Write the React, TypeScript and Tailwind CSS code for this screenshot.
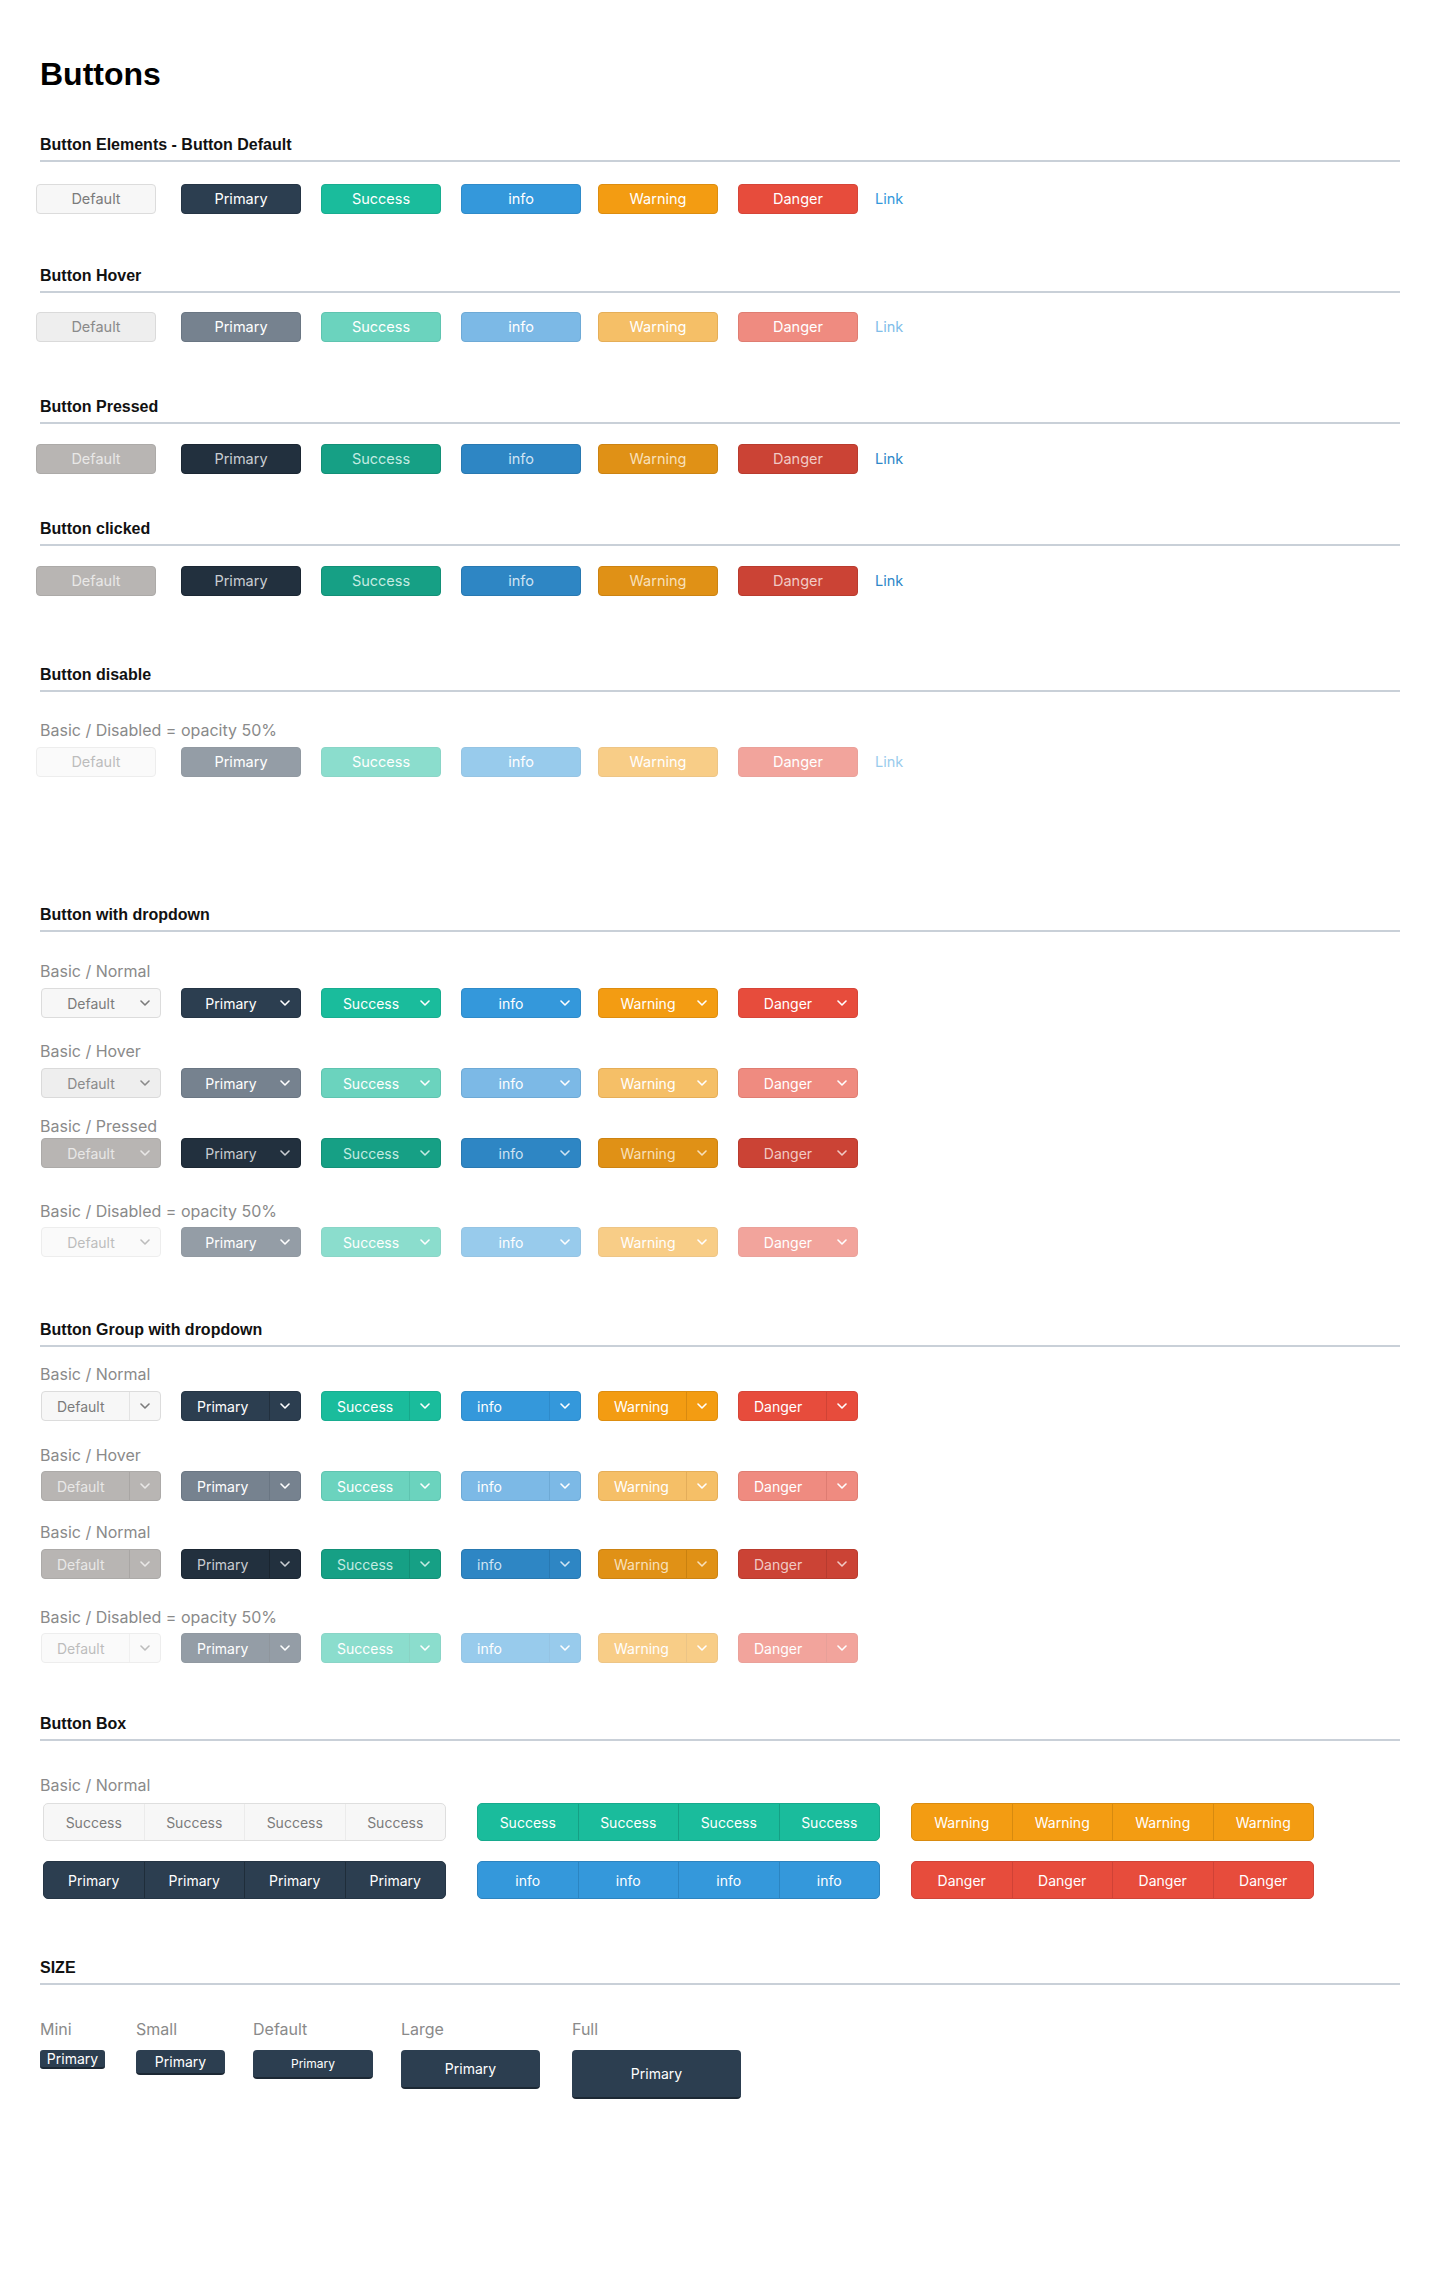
import React from 'react';

type Variant = 'default' | 'primary' | 'success' | 'info' | 'warning' | 'danger';
type State = 'normal' | 'hover' | 'pressed' | 'disabled';

const VARIANTS: Variant[] = ['default', 'primary', 'success', 'info', 'warning', 'danger'];

const LABELS: Record<Variant, string> = {
  default: 'Default',
  primary: 'Primary',
  success: 'Success',
  info: 'info',
  warning: 'Warning',
  danger: 'Danger',
};

const NORMAL: Record<Variant, string> = {
  default: 'bg-[#f7f7f7] border-[#dcdcdc] text-[#7b7b7b]',
  primary: 'bg-[#2c3e50] border-[#253545] text-white',
  success: 'bg-[#1abc9c] border-[#18ad90] text-white',
  info: 'bg-[#3498db] border-[#2f8bc9] text-white',
  warning: 'bg-[#f39c12] border-[#dd8d0f] text-white',
  danger: 'bg-[#e74c3c] border-[#d64538] text-white',
};

const HOVER: Record<Variant, string> = {
  default: 'bg-[#eeeeee] border-[#dadada] text-[#8a8a8a]',
  primary: 'bg-[#76828f] border-[#6a7683] text-white',
  success: 'bg-[#6bd3be] border-[#5fc4b0] text-white',
  info: 'bg-[#7cb9e6] border-[#6eaad6] text-white',
  warning: 'bg-[#f5bf67] border-[#e5ae58] text-white',
  danger: 'bg-[#ef8b80] border-[#df7d72] text-white',
};

const PRESSED: Record<Variant, string> = {
  default: 'bg-[#b8b5b3] border-[#acaaa8] text-[#e9e8e7]',
  primary: 'bg-[#22303e] border-[#1b2733] text-[#c9cdd2]',
  success: 'bg-[#16a085] border-[#139077] text-[#c4ebe2]',
  info: 'bg-[#2e86c4] border-[#2979b1] text-[#d0e4f3]',
  warning: 'bg-[#e09116] border-[#cc8312] text-[#f8e0bb]',
  danger: 'bg-[#cb4335] border-[#b93b2e] text-[#f1cac5]',
};

const DIVIDER: Record<'normal' | 'hover' | 'pressed', Record<Variant, string>> = {
  normal: {
    default: 'border-l-[#e3e3e3]',
    primary: 'border-l-[#22303e]',
    success: 'border-l-[#17a88b]',
    info: 'border-l-[#2e8bcb]',
    warning: 'border-l-[#d98a0f]',
    danger: 'border-l-[#d04335]',
  },
  hover: {
    default: 'border-l-[#a9a6a4]',
    primary: 'border-l-[#6a7683]',
    success: 'border-l-[#5fc4b0]',
    info: 'border-l-[#6eaad6]',
    warning: 'border-l-[#e3ad5a]',
    danger: 'border-l-[#de7c72]',
  },
  pressed: {
    default: 'border-l-[#a9a6a4]',
    primary: 'border-l-[#1a2530]',
    success: 'border-l-[#128f76]',
    info: 'border-l-[#2879b3]',
    warning: 'border-l-[#c9810f]',
    danger: 'border-l-[#b73b2f]',
  },
};

const LINK: Record<State, string> = {
  normal: 'text-[#3498db]',
  hover: 'text-[#80bde9]',
  pressed: 'text-[#2e87c8]',
  disabled: 'text-[#3498db] opacity-50',
};

const GAP_BASIC = ['-ml-1', 'ml-[25px]', 'ml-5', 'ml-5', 'ml-[17px]', 'ml-5'];
const GAP_DROP = ['ml-px', 'ml-5', 'ml-5', 'ml-5', 'ml-[17px]', 'ml-5'];

const styleFor = (state: State, v: Variant) => {
  if (state === 'hover') return HOVER[v];
  if (state === 'pressed') return PRESSED[v];
  if (state === 'disabled') return `${NORMAL[v]} opacity-50`;
  return NORMAL[v];
};

const Chevron = () => (
  <svg width="10" height="6" viewBox="0 0 10 6" fill="none">
    <path d="M1 1l4 4 4-4" stroke="currentColor" strokeWidth={1.6} strokeLinecap="round" strokeLinejoin="round" />
  </svg>
);

const SectionHeader: React.FC<{ title: string; className?: string }> = ({ title, className = '' }) => (
  <div className={className}>
    <h2 className="font-['Liberation_Sans',Arial,sans-serif] text-[16px] leading-5 font-bold text-[#111]">{title}</h2>
    <div className="mt-[5px] h-[2px] bg-[#c9d0d8]" />
  </div>
);

const SubLabel: React.FC<{ text: string; className?: string }> = ({ text, className = '' }) => (
  <div className={`text-[16px] leading-5 text-[#8a8a8a] ${className}`}>{text}</div>
);

const BasicRow: React.FC<{ state: State; className?: string }> = ({ state, className = '' }) => (
  <div className={`flex items-center ${className}`}>
    {VARIANTS.map((v, i) => (
      <button
        key={v}
        className={`${GAP_BASIC[i]} flex h-[30px] w-[120px] items-center justify-center rounded-[4px] border text-[14.5px] ${styleFor(state, v)}`}
      >
        {LABELS[v]}
      </button>
    ))}
    <span className={`ml-[17px] text-[14.5px] ${LINK[state]}`}>Link</span>
  </div>
);

const DropdownRow: React.FC<{ state: State; className?: string }> = ({ state, className = '' }) => (
  <div className={`flex items-center ${className}`}>
    {VARIANTS.map((v, i) => (
      <button
        key={v}
        className={`${GAP_DROP[i]} flex h-[30px] w-[120px] items-center rounded-[4px] border text-[14px] ${styleFor(state, v)}`}
      >
        <span className="flex-1 text-center">{LABELS[v]}</span>
        <span className="mr-[10px] flex">
          <Chevron />
        </span>
      </button>
    ))}
  </div>
);

const GroupRow: React.FC<{ state: State; className?: string }> = ({ state, className = '' }) => (
  <div className={`flex items-center ${className}`}>
    {VARIANTS.map((v, i) => {
      const look = state === 'hover' && v === 'default' ? PRESSED.default : styleFor(state, v);
      const div = DIVIDER[state === 'disabled' ? 'normal' : state][v];
      return (
        <div key={v} className={`${GAP_DROP[i]} flex h-[30px] w-[120px] items-stretch rounded-[4px] border text-[14px] ${look}`}>
          <span className="flex flex-1 items-center pl-[15px]">{LABELS[v]}</span>
          <span className={`flex w-[31px] items-center justify-center border-l ${div}`}>
            <Chevron />
          </span>
        </div>
      );
    })}
  </div>
);

const BOX: Record<Variant, { box: string; div: string }> = {
  default: { box: 'bg-[#f7f7f7] border-[#dedede] text-[#7b7b7b]', div: 'border-l-[#ebebeb]' },
  primary: { box: 'bg-[#2c3e50] border-[#253545] text-white', div: 'border-l-[#1f2d3a]' },
  success: { box: 'bg-[#1abc9c] border-[#17aa8d] text-white', div: 'border-l-[#15a085]' },
  info: { box: 'bg-[#3498db] border-[#2c84c0] text-white', div: 'border-l-[#2b85c2]' },
  warning: { box: 'bg-[#f39c12] border-[#d98b10] text-white', div: 'border-l-[#d68a0f]' },
  danger: { box: 'bg-[#e74c3c] border-[#d04437] text-white', div: 'border-l-[#cf4236]' },
};

const ButtonBox: React.FC<{ variant: Variant; label: string }> = ({ variant, label }) => (
  <div className={`flex h-[38px] w-[403px] rounded-[5px] border text-[14px] ${BOX[variant].box}`}>
    {[0, 1, 2, 3].map((n) => (
      <span key={n} className={`flex flex-1 items-center justify-center ${n > 0 ? `border-l ${BOX[variant].div}` : ''}`}>
        {label}
      </span>
    ))}
  </div>
);

const SIZES = [
  { name: 'Mini', col: '', btn: 'w-[65px] h-[19px] rounded-[3px] text-[14px]' },
  { name: 'Small', col: 'ml-[31px]', btn: 'w-[89px] h-[25px] rounded-[4px] text-[14px]' },
  { name: 'Default', col: 'ml-[28px]', btn: 'w-[120px] h-[29px] rounded-[4px] text-[12px]' },
  { name: 'Large', col: 'ml-[28px]', btn: 'w-[139px] h-[39px] rounded-[4px] text-[14px]' },
  { name: 'Full', col: 'ml-[32px]', btn: 'w-[169px] h-[49px] rounded-[4px] text-[14px]' },
];

const App: React.FC = () => {
  return (
    <div className="min-h-[2271px] w-[1440px] bg-white px-10 pb-20 pt-[58px] font-['Inter','Noto_Sans',sans-serif]">
      <h1 className="font-['Liberation_Sans',Arial,sans-serif] text-[32px] leading-8 font-bold text-black">Buttons</h1>

      <SectionHeader title="Button Elements - Button Default" className="mt-[45px]" />
      <BasicRow state="normal" className="mt-[22px]" />

      <SectionHeader title="Button Hover" className="mt-[52px]" />
      <BasicRow state="hover" className="mt-[19px]" />

      <SectionHeader title="Button Pressed" className="mt-[55px]" />
      <BasicRow state="pressed" className="mt-5" />

      <SectionHeader title="Button clicked" className="mt-[45px]" />
      <BasicRow state="pressed" className="mt-5" />

      <SectionHeader title="Button disable" className="mt-[69px]" />
      <SubLabel text="Basic / Disabled = opacity 50%" className="mt-[28px]" />
      <BasicRow state="disabled" className="mt-[7px]" />

      <SectionHeader title="Button with dropdown" className="mt-[128px]" />
      <SubLabel text="Basic / Normal" className="mt-[29px]" />
      <DropdownRow state="normal" className="mt-[7px]" />
      <SubLabel text="Basic / Hover" className="mt-[23px]" />
      <DropdownRow state="hover" className="mt-[7px]" />
      <SubLabel text="Basic / Pressed" className="mt-[18px]" />
      <DropdownRow state="pressed" className="mt-[2px]" />
      <SubLabel text="Basic / Disabled = opacity 50%" className="mt-[33px]" />
      <DropdownRow state="disabled" className="mt-[6px]" />

      <SectionHeader title="Button Group with dropdown" className="mt-[63px]" />
      <SubLabel text="Basic / Normal" className="mt-[17px]" />
      <GroupRow state="normal" className="mt-[7px]" />
      <SubLabel text="Basic / Hover" className="mt-[24px]" />
      <GroupRow state="hover" className="mt-[6px]" />
      <SubLabel text="Basic / Normal" className="mt-[21px]" />
      <GroupRow state="pressed" className="mt-[7px]" />
      <SubLabel text="Basic / Disabled = opacity 50%" className="mt-[28px]" />
      <GroupRow state="disabled" className="mt-[6px]" />

      <SectionHeader title="Button Box" className="mt-[51px]" />
      <SubLabel text="Basic / Normal" className="mt-[34px]" />
      <div className="ml-[3px] mt-2 flex gap-[31px]">
        <ButtonBox variant="default" label="Success" />
        <ButtonBox variant="success" label="Success" />
        <ButtonBox variant="warning" label="Warning" />
      </div>
      <div className="ml-[3px] mt-5 flex gap-[31px]">
        <ButtonBox variant="primary" label="Primary" />
        <ButtonBox variant="info" label="info" />
        <ButtonBox variant="danger" label="Danger" />
      </div>

      <SectionHeader title="SIZE" className="mt-[59px]" />
      <div className="mt-[34px] flex items-start">
        {SIZES.map((s) => (
          <div key={s.name} className={`flex flex-col items-start ${s.col}`}>
            <span className="text-[16px] leading-5 text-[#8a8a8a]">{s.name}</span>
            <button
              className={`mt-[11px] flex items-center justify-center border-b-2 border-b-[#1c2834] bg-[#2c3e50] text-white ${s.btn}`}
            >
              Primary
            </button>
          </div>
        ))}
      </div>
    </div>
  );
};

export default App;
